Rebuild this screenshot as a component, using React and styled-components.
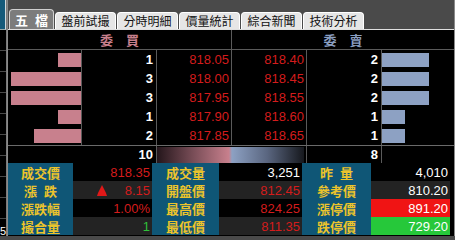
import React from 'react';
import styled, { createGlobalStyle } from 'styled-components';

const GlobalStyle = createGlobalStyle`
  html, body { margin: 0; padding: 0; background: #4a4a4a; }
  * { box-sizing: border-box; }
`;

const TABS = ['五 檔', '盤前試撮', '分時明細', '價量統計', '綜合新聞', '技術分析'];

const BIDS = [
  { qty: 1, price: '818.05' },
  { qty: 3, price: '818.00' },
  { qty: 3, price: '817.95' },
  { qty: 1, price: '817.90' },
  { qty: 2, price: '817.85' },
];

const ASKS = [
  { qty: 2, price: '818.40' },
  { qty: 2, price: '818.45' },
  { qty: 2, price: '818.55' },
  { qty: 1, price: '818.60' },
  { qty: 1, price: '818.65' },
];

const SUMMARY = [
  [
    { label: '成交價', value: '818.35', color: 'red' },
    { label: '成交量', value: '3,251', color: 'white' },
    { label: '昨 量', value: '4,010', color: 'white' },
  ],
  [
    { label: '漲 跌', value: '8.15', color: 'red', arrow: true },
    { label: '開盤價', value: '812.45', color: 'red' },
    { label: '參考價', value: '810.20', color: 'white' },
  ],
  [
    { label: '漲跌幅', value: '1.00%', color: 'red' },
    { label: '最高價', value: '824.25', color: 'red' },
    { label: '漲停價', value: '891.20', color: 'white', bg: '#f01414' },
  ],
  [
    { label: '撮合量', value: '1', color: 'green' },
    { label: '最低價', value: '811.35', color: 'red' },
    { label: '跌停價', value: '729.20', color: 'white', bg: '#26c83a' },
  ],
];

const UNIT = 23.4;

const colorMap = {
  red: '#d41c1c',
  white: '#ffffff',
  green: '#2fc23a',
};

const App = () => {
  return (
    <>
      <GlobalStyle />
      <Frame>
        <SideStrip>
          <SideCap />
          {Array.from({ length: 9 }).map((_, i) => (
            <SideRow key={i} />
          ))}
          <SideNum>5</SideNum>
        </SideStrip>

        <Panel>
          <TabBar>
            {TABS.map((t, i) => (
              <Tab key={t} $active={i === 0}>
                {t}
              </Tab>
            ))}
          </TabBar>

          <Book>
            <HeaderRow>
              <SideTitle $side="bid">委　買</SideTitle>
              <SideTitle $side="ask">委　賣</SideTitle>
            </HeaderRow>

            {BIDS.map((b, i) => {
              const a = ASKS[i];
              return (
                <BookRow key={b.price}>
                  <BarCell $side="bid">
                    <Bar $side="bid" style={{ width: Math.round(b.qty * UNIT) }} />
                  </BarCell>
                  <QtyCell>{b.qty}</QtyCell>
                  <PriceCell>{b.price}</PriceCell>
                  <PriceCell>{a.price}</PriceCell>
                  <QtyCell>{a.qty}</QtyCell>
                  <BarCell $side="ask">
                    <Bar $side="ask" style={{ width: Math.round(a.qty * UNIT) }} />
                  </BarCell>
                </BookRow>
              );
            })}

            <TotalRow>
              <EmptyCell />
              <QtyCell>10</QtyCell>
              <GaugeCell>
                <Gauge />
              </GaugeCell>
              <QtyCell>8</QtyCell>
              <EmptyCell $last />
            </TotalRow>
          </Book>

          <Summary>
            {SUMMARY.map((row, r) => (
              <React.Fragment key={r}>
                {row.map((c) => (
                  <React.Fragment key={c.label}>
                    <LabelCell>{c.label}</LabelCell>
                    <ValueCell $odd={r % 2 === 1} $bg={c.bg} $color={colorMap[c.color]}>
                      {c.arrow && (
                        <Arrow viewBox="0 0 10 11">
                          <path d="M5 0 L9 8 L10 11 L0 11 L1 8 Z" fill="#e01818" />
                        </Arrow>
                      )}
                      {c.value}
                    </ValueCell>
                  </React.Fragment>
                ))}
                <Filler $odd={r % 2 === 1} />
              </React.Fragment>
            ))}
          </Summary>
        </Panel>
        <RightEdge />
      </Frame>
    </>
  );
};

export default App;

const Frame = styled.div`
  display: flex;
  width: 455px;
  height: 236px;
  overflow: hidden;
  background: #4a4a4a;
`;

const SideStrip = styled.div`
  width: 7px;
  display: flex;
  flex-direction: column;
  background: #000;
  border-right: 1px solid #7a7a7a;
`;

const SideCap = styled.div`
  height: 30px;
  background: #145a7a;
  border-right: 1px solid #cfd8dc;
  border-bottom: 1px solid #9aa;
`;

const SideRow = styled.div`
  height: 21px;
  border-bottom: 1px solid #4a4a4a;
`;

const SideNum = styled.div`
  margin-top: auto;
  font: 11px "Liberation Sans", Arial, sans-serif;
  color: #fff;
  line-height: 10px;
`;

const Panel = styled.div`
  width: 447px;
  display: flex;
  flex-direction: column;
  border-left: 1px solid #8a8a8a;
  background: #000;
`;

const TabBar = styled.div`
  height: 30px;
  display: flex;
  align-items: flex-end;
  gap: 1px;
  padding-left: 1px;
  background: #4a4a4a;
  border-bottom: 1px solid #e0e0e0;
`;

const Tab = styled.div`
  width: ${(p) => (p.$active ? '45px' : '61px')};
  height: ${(p) => (p.$active ? '20px' : '17px')};
  display: flex;
  align-items: center;
  justify-content: center;
  border: 1px solid ${(p) => (p.$active ? '#d0d0d0' : '#ffffff')};
  border-bottom: none;
  border-radius: 4px 4px 0 0;
  background: ${(p) => (p.$active ? '#7c7c7c' : '#e6e6e6')};
  color: ${(p) => (p.$active ? '#ffffff' : '#111111')};
  font-family: "Noto Sans CJK TC", sans-serif;
  font-size: ${(p) => (p.$active ? '13px' : '12px')};
  font-weight: ${(p) => (p.$active ? 700 : 400)};
  word-spacing: 4px;
  line-height: 1;
`;

const Book = styled.div`
  display: flex;
  flex-direction: column;
  background: #000;
`;

const HeaderRow = styled.div`
  height: 20px;
  display: grid;
  grid-template-columns: 224px 222px;
  border-bottom: 1px solid #5a5a5a;
`;

const SideTitle = styled.div`
  display: flex;
  align-items: center;
  justify-content: center;
  font-family: "Noto Sans CJK TC", sans-serif;
  font-size: 13px;
  font-weight: 700;
  color: ${(p) => (p.$side === 'bid' ? '#c77f8c' : '#8a9ec0')};
  border-right: ${(p) => (p.$side === 'bid' ? '1px solid #5a5a5a' : 'none')};
`;

const BookRow = styled.div`
  height: 19px;
  display: grid;
  grid-template-columns: 74px 75px 75px 75px 75px 72px;
  &:nth-child(6) {
    border-bottom: 1px solid #6a6a6a;
    height: 20px;
  }
`;

const BarCell = styled.div`
  display: flex;
  align-items: center;
  justify-content: ${(p) => (p.$side === 'bid' ? 'flex-end' : 'flex-start')};
  border-right: ${(p) => (p.$side === 'bid' ? '1px solid #5a5a5a' : 'none')};
`;

const Bar = styled.div`
  height: 14px;
  background: ${(p) => (p.$side === 'bid' ? '#c8808d' : '#8da1c3')};
`;

const QtyCell = styled.div`
  display: flex;
  align-items: center;
  justify-content: flex-end;
  padding-right: 3px;
  border-right: 1px solid #5a5a5a;
  font-family: "Liberation Sans", Arial, sans-serif;
  font-size: 13px;
  font-weight: 700;
  color: #ffffff;
`;

const PriceCell = styled.div`
  display: flex;
  align-items: center;
  justify-content: flex-end;
  padding-right: 2px;
  border-right: 1px solid #5a5a5a;
  font-family: "Liberation Sans", Arial, sans-serif;
  font-size: 13px;
  color: #d41c1c;
`;

const TotalRow = styled.div`
  height: 17px;
  display: grid;
  grid-template-columns: 74px 75px 150px 75px 72px;
`;

const EmptyCell = styled.div`
  border-right: ${(p) => (p.$last ? 'none' : '0')};
`;

const GaugeCell = styled.div`
  display: flex;
  align-items: center;
  padding: 0 2px 0 0;
  border-right: 1px solid #5a5a5a;
`;

const Gauge = styled.div`
  width: 100%;
  height: 16px;
  background: linear-gradient(
    to right,
    #24161b 0%,
    #7a4e58 25%,
    #c8808d 49%,
    #8da1c3 51%,
    #5a6680 75%,
    #16181d 100%
  );
`;

const Summary = styled.div`
  display: grid;
  grid-template-columns: 65px 79px 67px 83px 69px 79px 4px;
  grid-auto-rows: 18px;
`;

const LabelCell = styled.div`
  display: flex;
  align-items: center;
  justify-content: center;
  background: #0f5676;
  color: #ecc42c;
  font-family: "Noto Sans CJK TC", sans-serif;
  font-size: 13px;
  font-weight: 700;
  word-spacing: 4px;
`;

const ValueCell = styled.div`
  display: flex;
  align-items: center;
  justify-content: flex-end;
  padding-right: 2px;
  background: ${(p) => p.$bg || (p.$odd ? '#232323' : '#000')};
  color: ${(p) => p.$color};
  font-family: "Liberation Sans", Arial, sans-serif;
  font-size: 13px;
`;

const Filler = styled.div`
  background: #000;
`;

const Arrow = styled.svg`
  width: 10px;
  height: 11px;
  margin-left: 24px;
  margin-right: auto;
`;

const RightEdge = styled.div`
  width: 1px;
  background: #8a8a8a;
`;
